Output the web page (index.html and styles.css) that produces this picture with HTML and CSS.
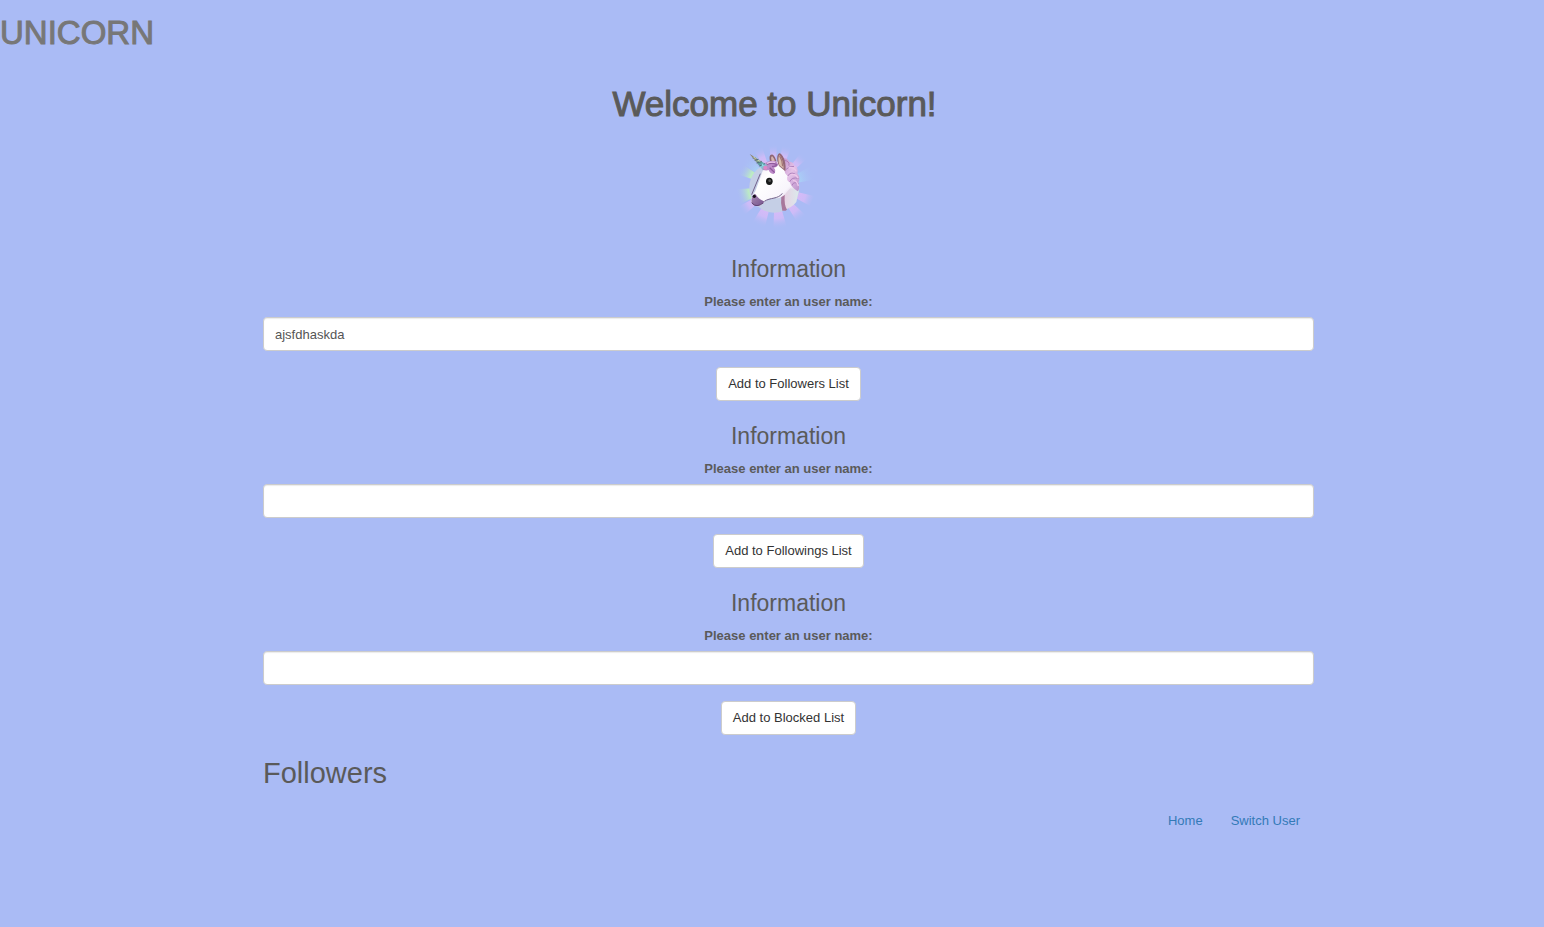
FILE: index.html
```html
<!DOCTYPE html>
<html lang="en">
<head>
<meta charset="utf-8">
<title>Unicorn</title>
<link rel="stylesheet" href="styles.css">
</head>
<body>
<header class="brand">UNICORN</header>
<div class="welcome">
  <h1 class="title">Welcome to Unicorn!</h1>
  <svg class="logo" viewBox="0 0 270 300" role="img" aria-label="Unicorn">
    <defs>
      <radialGradient id="ray" gradientUnits="userSpaceOnUse" cx="135" cy="155" r="128">
        <stop offset=".5" stop-color="#dabaf8"/><stop offset=".75" stop-color="#cdbbf7"/><stop offset="1" stop-color="#aabbf5" stop-opacity="0"/>
      </radialGradient>
      <radialGradient id="green" gradientUnits="userSpaceOnUse" cx="135" cy="155" r="118">
        <stop offset=".68" stop-color="#bcebc4"/><stop offset="1" stop-color="#aabbf5" stop-opacity="0"/>
      </radialGradient>
      <radialGradient id="cyan" gradientUnits="userSpaceOnUse" cx="135" cy="155" r="126">
        <stop offset=".55" stop-color="#a9d4f6"/><stop offset="1" stop-color="#aabbf5" stop-opacity="0"/>
      </radialGradient>
      <linearGradient id="face" x1="0" y1="0" x2="1" y2="1">
        <stop offset="0" stop-color="#e8e0ee"/><stop offset=".35" stop-color="#fff"/><stop offset=".7" stop-color="#f8f5fc"/><stop offset="1" stop-color="#b99fc5"/>
      </linearGradient>
      <linearGradient id="neck" x1="0" y1="0" x2="1" y2="0">
        <stop offset="0" stop-color="#ae789f"/><stop offset=".4" stop-color="#e6d3e4"/><stop offset="1" stop-color="#dbe9ec"/>
      </linearGradient>
      <linearGradient id="muzzle" x1="0" y1="0" x2="1" y2="1">
        <stop offset="0" stop-color="#aa8bb5"/><stop offset="1" stop-color="#73518c"/>
      </linearGradient>
      <linearGradient id="mane" x1="0" y1="0" x2="1" y2="1">
        <stop offset="0" stop-color="#bd8bc6"/><stop offset=".5" stop-color="#e5c2e8"/><stop offset="1" stop-color="#b990c9"/>
      </linearGradient>
      <linearGradient id="horn" x1="0" y1="0" x2="1" y2="1">
        <stop offset="0" stop-color="#776b58"/><stop offset=".3" stop-color="#a9a27d"/><stop offset=".58" stop-color="#579b9a"/><stop offset=".72" stop-color="#80ccda"/><stop offset="1" stop-color="#c36ba9"/>
      </linearGradient>
    </defs>
    <g fill="url(#ray)">
      <path d="M135 155 70 42 94 28Z"/><path d="M135 155 116 22 141 20Z"/><path d="M135 155 159 20 187 30Z"/>
      <path d="M135 155 216 48 236 67Z"/><path d="M135 155 252 183 239 212Z"/><path d="M135 155 227 241 202 262Z"/>
      <path d="M135 155 172 282 130 286Z"/><path d="M135 155 103 282 65 266Z"/><path d="M135 155 44 240 28 214Z"/>
    </g>
    <g fill="url(#green)"><path d="M135 155 20 117 30 82Z"/><path d="M135 155 20 163 30 208Z"/></g>
    <g fill="url(#cyan)"><path d="M135 155 248 90 264 132Z"/><path d="M135 155 37 84 55 58Z"/></g>
    <circle cx="133" cy="158" r="75" fill="#c5cfe6"/>
    <path d="M154 181C157 194 154 211 158 226Q184 220 199 201L206 169 178 118 139 139Z" fill="url(#neck)"/>
    <path d="M154 182Q151 205 157 227Q165 229 171 224Q162 211 164 180Z" fill="#a8779c"/>
    <path d="M121 83C116 66 119 57 128 59Q136 64 140 82Z" fill="#8d6573"/><path d="M125 78Q121 64 127 64 133 70 135 82Z" fill="#d6b3b0"/>
    <path d="M98 108C115 78 142 71 164 90C184 99 196 121 199 147Q199 165 181 160C171 169 160 190 141 190C122 187 109 193 97 207Q84 219 69 209C59 202 64 184 76 169Z" fill="url(#face)"/>
    <path d="M91 116 65 179M157 175C145 193 120 187 103 199" fill="none" stroke="#73628b" stroke-width="3"/>
    <path d="M73 176C65 184 62 195 66 206C77 219 93 212 103 199C91 196 83 188 77 178Z" fill="url(#muzzle)"/>
    <path d="M65 203Q79 221 101 203" fill="none" stroke="#614374" stroke-width="3"/>
    <ellipse cx="73" cy="184" rx="5" ry="5" fill="#17111f"/>
    <ellipse cx="118" cy="139" rx="10" ry="11" fill="#171919"/><ellipse cx="119" cy="137" rx="4" ry="4" fill="#555"/>
    <path d="M151 72Q170 65 178 80 191 80 192 91 207 98 202 115 213 129 205 143 211 160 203 169Q184 157 179 141 167 137 173 122 162 116 164 102 153 95 151 72Z" fill="url(#mane)"/>
    <path d="M163 76Q180 78 177 91M168 103Q177 93 191 94M174 122Q181 109 195 117M180 139Q185 125 204 130M187 150Q188 139 205 145" fill="none" stroke="#ae80bb" stroke-width="3" stroke-linecap="round"/>
    <path d="M176 99Q190 94 199 109M183 119Q199 116 204 130M189 137Q201 136 205 153" fill="none" stroke="#edc7ea" stroke-width="4"/>
    <path d="M101 93C105 81 115 77 130 78Q142 76 144 88 144 97 131 98 140 105 132 117 120 117 116 105 108 108 98 104Z" fill="#bd8bc9"/>
    <path d="M110 88Q124 82 139 88M119 98Q125 103 134 113M126 94Q137 96 142 88" fill="none" stroke="#905a9e" stroke-width="4"/>
    <path d="M111 85Q122 80 135 82" stroke="#e8c4e7" stroke-width="4" fill="none"/>
    <path d="M147 93C137 71 142 54 150 55 163 64 169 87 166 109Z" fill="#946776"/><path d="M148 91Q142 67 149 60 160 76 161 101Z" fill="#d8bdad"/><path d="M149 63Q157 75 158 94" stroke="#a27374" stroke-width="4" fill="none"/>
    <path d="M59 57 113 91Q111 105 99 106Z" fill="url(#horn)"/>
    <path d="M68 69 76 68M74 76 85 73M80 84 95 79M88 93 105 86" stroke="#4f687d" stroke-width="3"/>
    <path d="M70 66 77 70M83 76 91 79" stroke="#d1d9af" stroke-width="3"/>
    <circle cx="106" cy="98" r="6" fill="#df88c7"/><circle cx="98" cy="90" r="3" fill="#8ee2e7"/>
  </svg>
</div>
<main class="content">
  <form class="entry">
    <h2 class="entry-title">Information</h2>
    <label class="label" for="follower">Please enter an user name:</label>
    <input class="field" id="follower" type="text" value="ajsfdhaskda">
    <button class="button" type="button">Add to Followers List</button>
  </form>
  <form class="entry">
    <h2 class="entry-title">Information</h2>
    <label class="label" for="following">Please enter an user name:</label>
    <input class="field" id="following" type="text">
    <button class="button" type="button">Add to Followings List</button>
  </form>
  <form class="entry">
    <h2 class="entry-title">Information</h2>
    <label class="label" for="blocked">Please enter an user name:</label>
    <input class="field" id="blocked" type="text">
    <button class="button" type="button">Add to Blocked List</button>
  </form>
  <h2 class="list-title">Followers</h2>
  <nav class="links"><a class="link" href="#">Home</a><a class="link" href="#">Switch User</a></nav>
</main>
</body>
</html>
```
FILE: styles.css
```css
* { box-sizing: border-box; }
body {
  margin: 0;
  background: #aabbf5;
  color: #5a5a5a;
  font: 13px/20px "Liberation Sans", Arial, sans-serif;
}
.brand {
  padding-top: 13px;
  color: #777;
  font-size: 33px;
  line-height: 40px;
  -webkit-text-stroke: 1px #777;
}
.welcome {
  display: flex;
  flex-direction: column;
  align-items: center;
  padding: 31px 0 21px 5px;
}
.title {
  margin: 0 0 11px;
  font-size: 35px;
  font-weight: 500;
  line-height: 40px;
  -webkit-text-stroke: 1px #5a5a5a;
}
.logo { display: block; width: 90px; height: 100px; }
.content { padding: 0 230px 0 263px; }
.entry {
  display: flex;
  flex-direction: column;
  align-items: center;
  margin-bottom: 22px;
}
.entry-title {
  margin: 0 0 10px;
  font-size: 23px;
  font-weight: 500;
  line-height: 26px;
}
.label { margin-bottom: 5px; font-weight: 700; }
.field {
  width: 100%;
  height: 34px;
  margin-bottom: 16px;
  padding: 6px 11px;
  border: 1px solid #ccc;
  border-radius: 4px;
  background: #fff;
  color: #555;
  font: inherit;
  box-shadow: inset 0 1px 1px rgba(0, 0, 0, .08);
}
.button {
  height: 34px;
  padding: 6px 11px;
  border: 1px solid #ccc;
  border-radius: 4px;
  background: #fff;
  color: #333;
  font: inherit;
}
.list-title {
  margin: 0;
  font-size: 29px;
  font-weight: 500;
  line-height: 32px;
}
.links {
  display: flex;
  justify-content: flex-end;
  gap: 28px;
  padding: 22px 14px;
}
.link { color: #337ab7; text-decoration: none; }
```
